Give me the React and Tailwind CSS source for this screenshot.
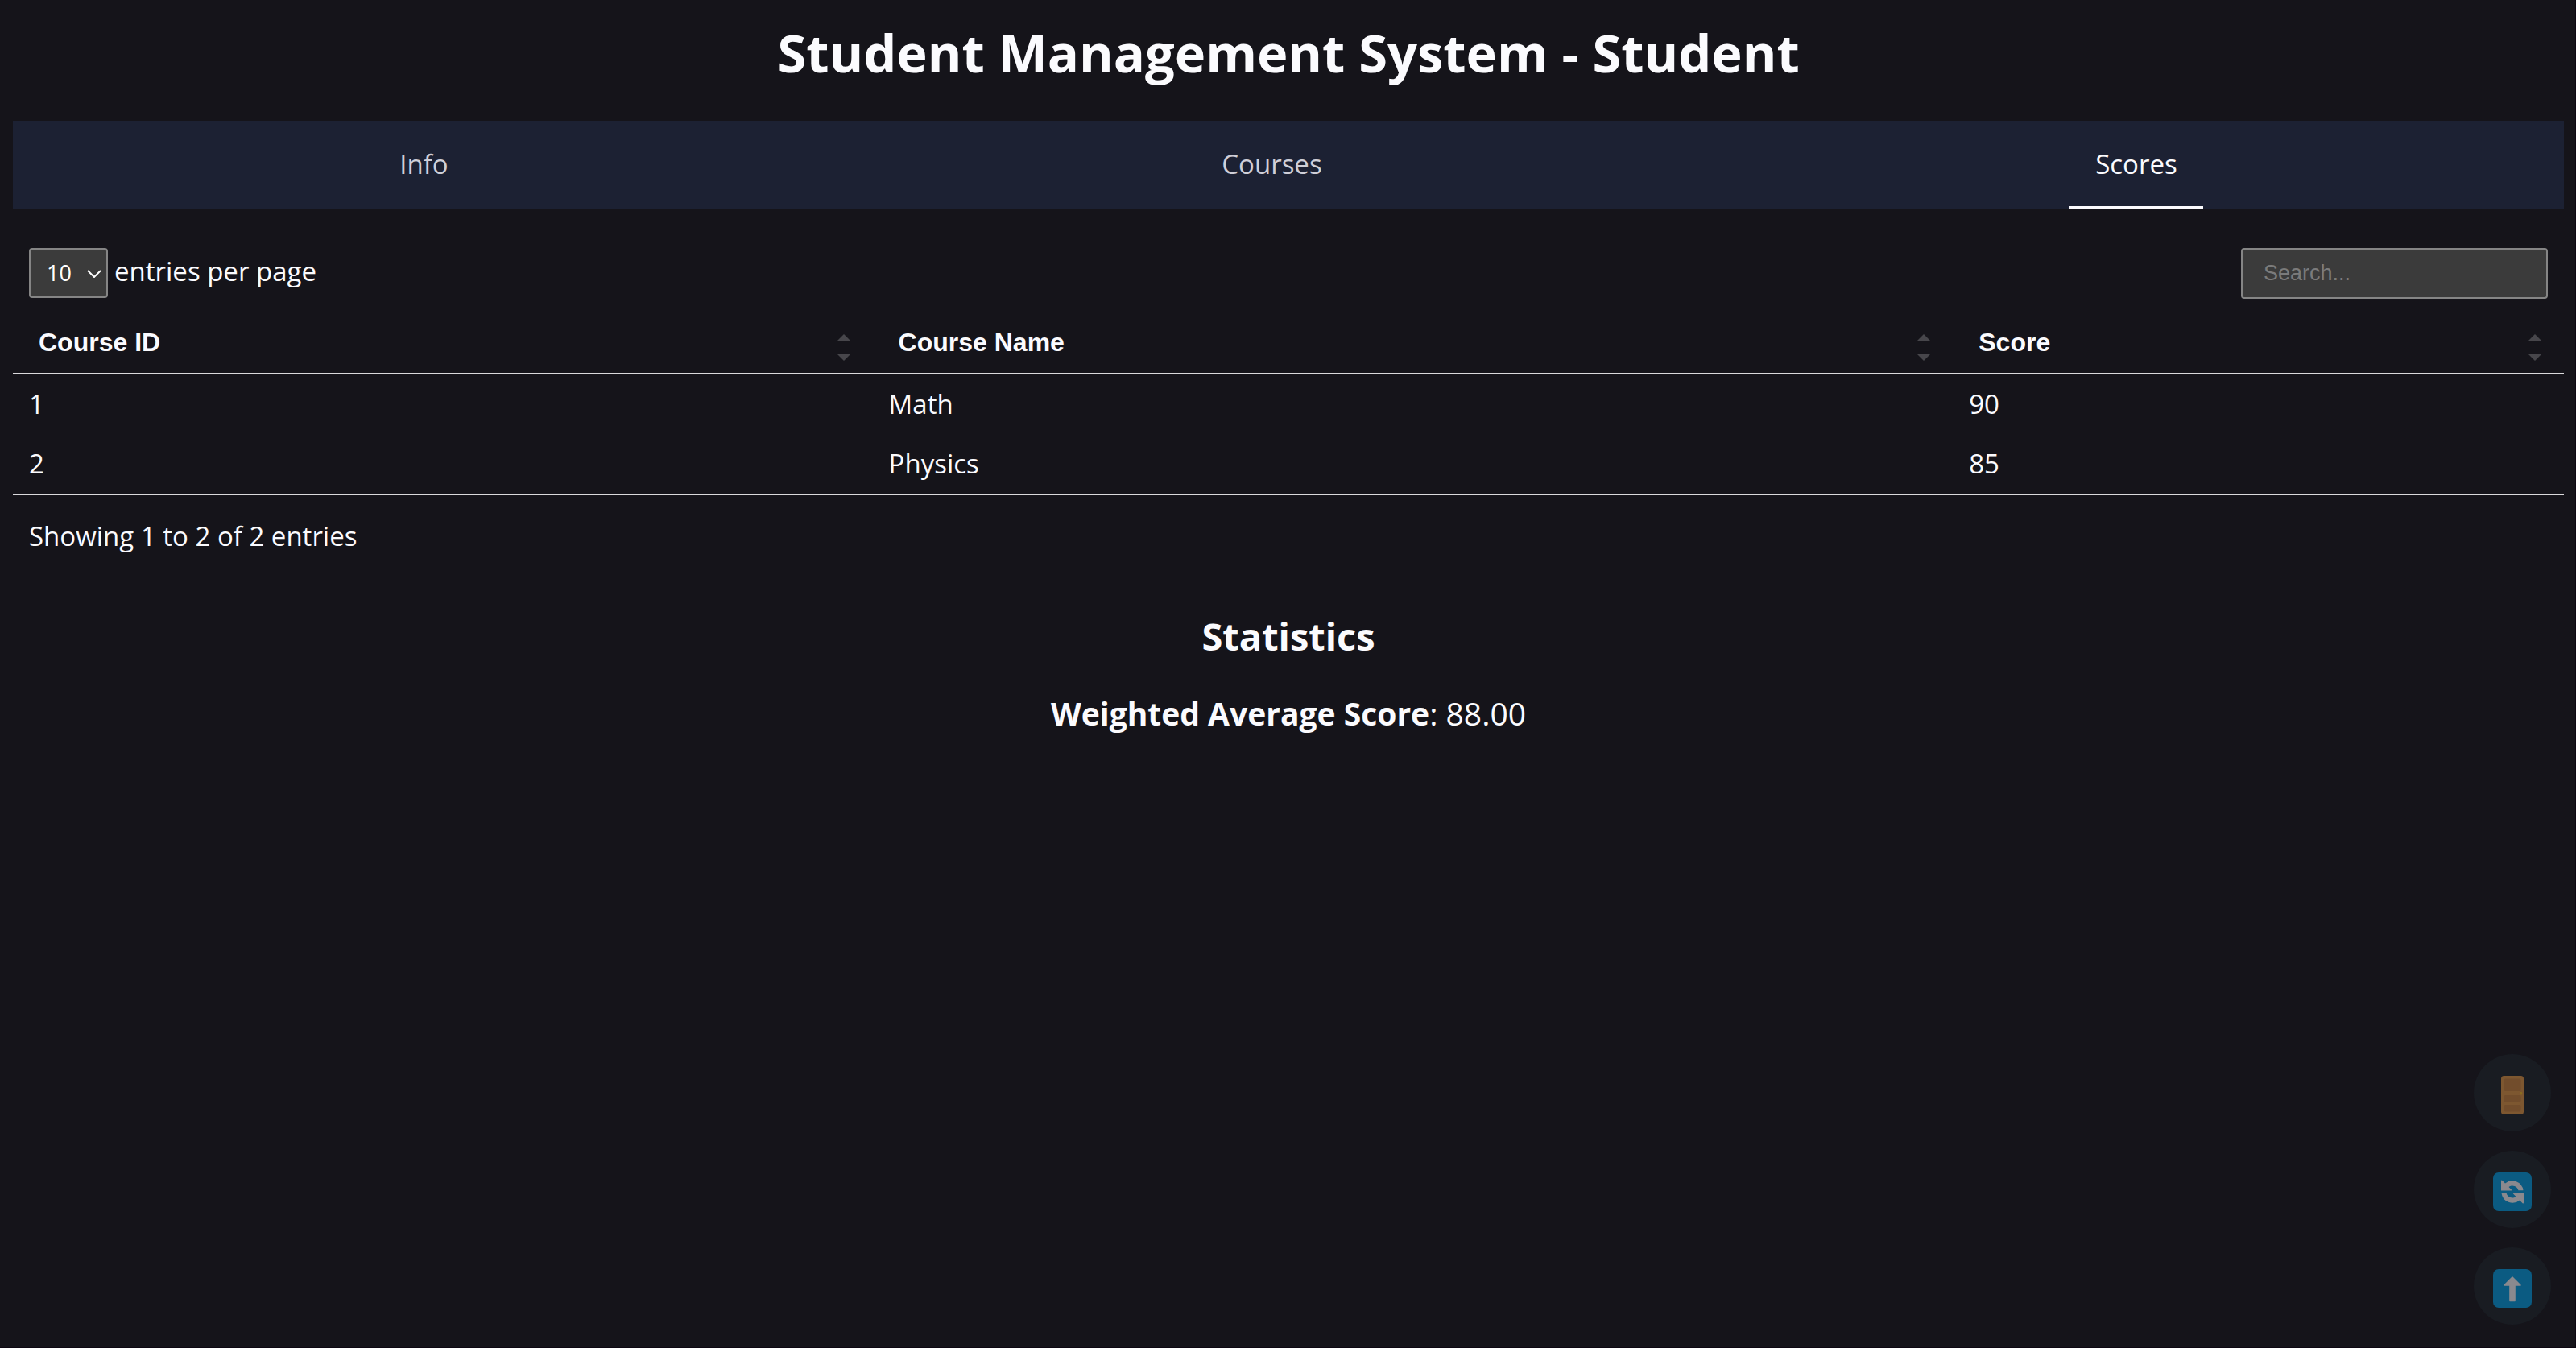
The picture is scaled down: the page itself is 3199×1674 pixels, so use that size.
import { useState } from "react";

const columns = [
  { label: "Course ID", width: "w-[33.7%]" },
  { label: "Course Name", width: "w-[42.35%]" },
  { label: "Score", width: "w-[23.95%]" },
];

const rows = [
  ["1", "Math", "90"],
  ["2", "Physics", "85"],
];

const tabs = ["Info", "Courses", "Scores"];

function SortIcon() {
  return (
    <svg aria-hidden="true" viewBox="0 0 16 33" className="mt-3 h-[33px] w-4 fill-[#47464b]">
      <path d="M8 0 16 8H0Z" />
      <path d="M0 25H16L8 33Z" />
    </svg>
  );
}

function DoorIcon() {
  return (
    <svg aria-hidden="true" viewBox="0 0 48 48" className="size-12">
      <rect x="10" width="28" height="48" rx="3.5" fill="#7d5730" />
      <rect x="13.5" y="3.5" width="21" height="15.5" rx="2" fill="#724d2c" />
      <rect x="13.5" y="24" width="21" height="8.5" rx="2" fill="#724d2c" />
      <rect x="13.5" y="36" width="21" height="8.5" rx="2" fill="#724d2c" />
      <rect x="33" y="20" width="3.2" height="3.4" rx="1" fill="#8a6c20" />
    </svg>
  );
}

function RefreshIcon() {
  const arrow =
    "M37.5 22.3A13.7 13.7 0 0 0 15 13.6L11.6 10Q10 8.6 10 10.8V22.5H22.6Q23.6 22.5 23 21.6L19.5 17.9A7.6 7.6 0 0 1 31.4 22.3Z";
  return (
    <svg aria-hidden="true" viewBox="0 0 48 48" className="size-12">
      <rect width="48" height="48" rx="7" fill="#0b5b82" />
      <path d={arrow} fill="#8a898e" />
      <path d={arrow} fill="#8a898e" transform="rotate(180 24 24)" />
    </svg>
  );
}

function TopIcon() {
  return (
    <svg aria-hidden="true" viewBox="0 0 48 48" className="size-12">
      <rect width="48" height="48" rx="7" fill="#0b5b82" />
      <path
        d="M24 10 34 20H27V39.5H21V20H14Z"
        fill="#8a898e"
        stroke="#8a898e"
        strokeWidth="1.6"
        strokeLinejoin="round"
      />
    </svg>
  );
}

function FloatingButton({ label, children }) {
  return (
    <button
      type="button"
      aria-label={label}
      className="flex size-24 items-center justify-center rounded-full bg-[#191c22] pt-1.5"
    >
      {children}
    </button>
  );
}

export default function App() {
  const [active, setActive] = useState("Scores");

  return (
    <div className="min-h-screen border-r border-b border-[#0d0712] bg-[#15141a] pr-[14px] pl-4 font-['Open_Sans','Noto_Sans',sans-serif] text-[33px] leading-[42px] text-[#fbfbfe]">
      <h1 className="pt-5 pb-10 text-center text-[65px] leading-[90px] font-bold">
        Student Management System - Student
      </h1>

      <nav className="flex justify-around bg-[#1c2133] leading-[44px]">
        {tabs.map((tab) => (
          <a
            key={tab}
            href={"#" + tab.toLowerCase()}
            aria-current={tab === active ? "page" : undefined}
            onClick={() => setActive(tab)}
            className={
              tab === active
                ? "border-b-4 border-[#fbfbfe] px-8 pt-8 pb-[30px] text-[#fbfbfe]"
                : "border-b-4 border-transparent px-8 pt-8 pb-[30px] text-[#cfcfd8]"
            }
          >
            {tab}
          </a>
        ))}
      </nav>

      <main>
        <div className="flex items-start justify-between px-5 pt-12 pb-4">
          <label className="flex items-baseline gap-2">
            <span className="relative">
              <select
                defaultValue="10"
                className="h-[62px] w-[98px] appearance-none rounded-[4px] border-2 border-[#858585] bg-[#3b3b3b] pl-5 text-[27px] text-white"
              >
                <option>5</option>
                <option>10</option>
                <option>15</option>
                <option>20</option>
                <option>25</option>
              </select>
              <svg
                aria-hidden="true"
                viewBox="0 0 18 10"
                className="pointer-events-none absolute top-1/2 right-2 h-2.5 w-[18px] -translate-y-1 fill-none stroke-white stroke-2"
              >
                <path d="M1 1 9 9 17 1" />
              </svg>
            </span>
            <span>entries per page</span>
          </label>
          <input
            type="search"
            aria-label="Search within table"
            placeholder="Search..."
            className="h-[63px] w-[381px] rounded-[4px] border-2 border-[#858585] bg-[#3b3b3b] px-[26px] font-['Liberation_Sans',sans-serif] text-[27px] leading-8 placeholder:text-[#7b7b7b]"
          />
        </div>

        <table className="w-full table-fixed border-separate border-spacing-0 text-left">
          <thead>
            <tr>
              {columns.map((column) => (
                <th key={column.label} scope="col" className={column.width + " border-b-2 border-[#dad9dc] p-0"}>
                  <button
                    type="button"
                    className="flex h-[76px] w-full items-center justify-between pr-7 pl-8 font-['Liberation_Sans',sans-serif] text-[32px] leading-9 font-bold"
                  >
                    {column.label}
                    <SortIcon />
                  </button>
                </th>
              ))}
            </tr>
          </thead>
          <tbody>
            {rows.map((row, index) => (
              <tr key={row[0]}>
                {row.map((cell) => (
                  <td
                    key={cell}
                    className={
                      index === rows.length - 1 ? "border-b-2 border-[#dad9dc] px-5 py-4" : "px-5 py-4"
                    }
                  >
                    {cell}
                  </td>
                ))}
              </tr>
            ))}
          </tbody>
        </table>

        <p className="mt-[30px] px-5">Showing 1 to 2 of 2 entries</p>

        <section className="text-center">
          <h2 className="mt-[71px] text-[47px] leading-[64px] font-bold">Statistics</h2>
          <p className="mt-9 text-[39px] leading-[56px]">
            <strong className="font-bold">Weighted Average Score</strong>: 88.00
          </p>
        </section>
      </main>

      <div className="fixed right-[31px] bottom-[29px] flex flex-col gap-6">
        <FloatingButton label="Log out">
          <DoorIcon />
        </FloatingButton>
        <FloatingButton label="Refresh">
          <RefreshIcon />
        </FloatingButton>
        <FloatingButton label="Back to top">
          <TopIcon />
        </FloatingButton>
      </div>
    </div>
  );
}
